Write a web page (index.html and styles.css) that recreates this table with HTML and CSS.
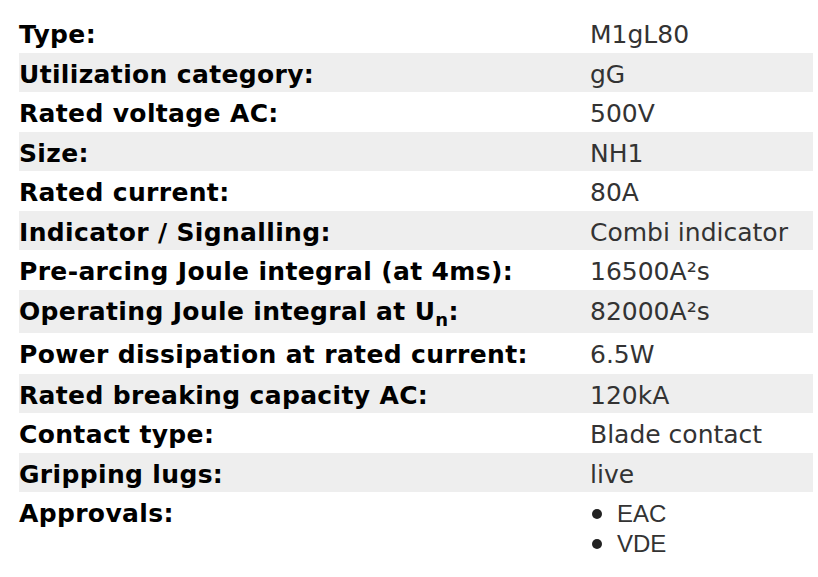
FILE: index.html
```html
<!DOCTYPE html>
<html>
<head>
<meta charset="utf-8">
<link rel="stylesheet" href="styles.css">
</head>
<body>
<table class="specs">
  <tbody>
    <tr><th>Type:</th><td>M1gL80</td></tr>
    <tr><th>Utilization category:</th><td>gG</td></tr>
    <tr><th>Rated voltage AC:</th><td>500V</td></tr>
    <tr><th>Size:</th><td>NH1</td></tr>
    <tr><th>Rated current:</th><td>80A</td></tr>
    <tr><th>Indicator / Signalling:</th><td>Combi indicator</td></tr>
    <tr><th>Pre-arcing Joule integral (at 4ms):</th><td>16500A²s</td></tr>
    <tr class="tall"><th>Operating Joule integral at U<sub>n</sub>:</th><td>82000A²s</td></tr>
    <tr class="mid"><th>Power dissipation at rated current:</th><td>6.5W</td></tr>
    <tr><th>Rated breaking capacity AC:</th><td>120kA</td></tr>
    <tr><th>Contact type:</th><td>Blade contact</td></tr>
    <tr><th>Gripping lugs:</th><td>live</td></tr>
    <tr class="approvals"><th>Approvals:</th><td><ul class="list"><li>EAC</li><li>VDE</li></ul></td></tr>
  </tbody>
</table>
</body>
</html>
```
FILE: styles.css
```css
html, body {
  margin: 0;
  background: #ffffff;
}
body {
  padding: 13px 5px 0 19px;
}
.specs {
  border-collapse: collapse;
  width: 794px;
  font-family: Verdana, "DejaVu Sans", sans-serif;
  font-size: 25px;
}
.specs tr:nth-child(even) {
  background: #eeeeee;
}
.specs th,
.specs td {
  padding: 6px 0 2px;
  line-height: 31.5px;
  vertical-align: top;
  white-space: nowrap;
}
.specs .tall th,
.specs .tall td {
  padding-bottom: 5.5px;
}
.specs .mid th,
.specs .mid td {
  padding-bottom: 3.5px;
}
.specs th {
  width: 571px;
  text-align: left;
  font-weight: bold;
  letter-spacing: 0.35px;
  color: #000000;
}
.specs td {
  color: #333333;
}
.specs sub {
  font-size: 72%;
  line-height: 0;
  vertical-align: -6px;
}
.list {
  list-style: none;
  margin: 1px 0 0;
  padding: 0 0 0 2px;
  font-family: "Liberation Sans", Arial, sans-serif;
  font-size: 24px;
  line-height: 30px;
}
.list li::before {
  content: "";
  display: inline-block;
  width: 10px;
  height: 10px;
  border-radius: 50%;
  background: #222222;
  margin-right: 15px;
  vertical-align: 3px;
}
```
